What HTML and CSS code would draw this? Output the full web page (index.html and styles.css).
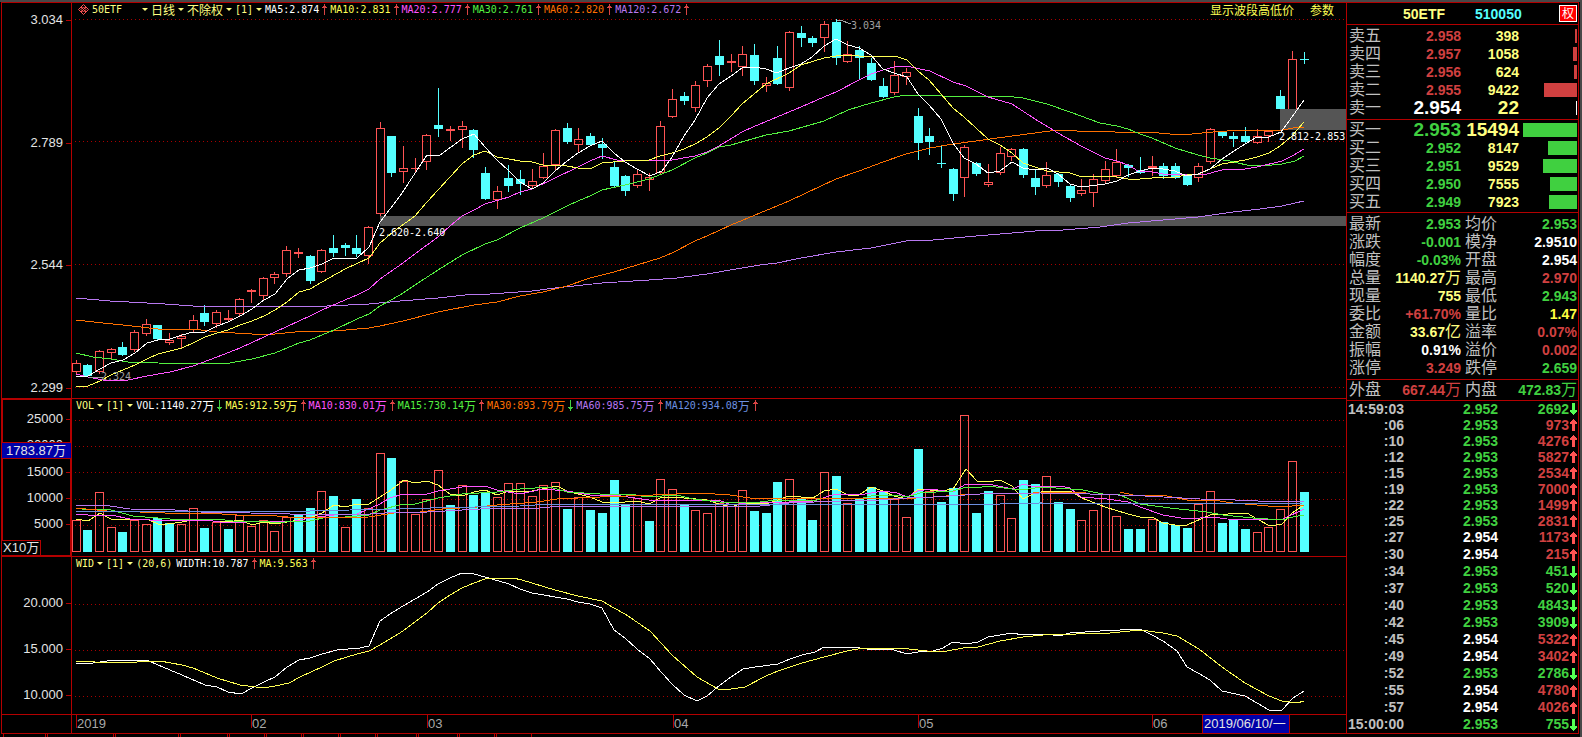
FILE: index.html
```html
<!DOCTYPE html>
<html lang="zh-CN">
<head>
<meta charset="utf-8">
<title>50ETF 510050 日线</title>
<link rel="stylesheet" href="styles.css">
</head>
<body>
<div class="app">
  <main class="charts">
    <section class="panel panel-price">
      <div class="axis axis-price"><span class="tick">3.034</span><span class="tick">2.789</span><span class="tick">2.544</span><span class="tick">2.299</span></div>
      <div class="plot">
        <svg class="canvas canvas-price" viewBox="72 3 1274 395" preserveAspectRatio="none">
          <path class="grid" d="M75 19.5H1346M75 141.5H1346M75 264.5H1346M75 387.5H1346"/>
          <g id="candles"></g>
          <rect class="gap" x="380" y="216" width="966" height="10"/>
          <rect class="gap" x="1280" y="109" width="66" height="21"/>
          <polyline class="line purple" points="76,298 110,301 147,303 165,304 193,306 327,306 369,304 400,301 438,298 474,294 490,294 532,291 555,288 602,283 649,280 677,278 707,274 742,268 760,265 777,263 801,258 836,252 871,248 906,241 933,240 976,236 1012,233 1047,230 1063,230 1100,227 1128,223 1163,220 1198,217 1233,212 1260,209 1282,206 1304,201"/>
          <polyline class="line orange" points="76,320 103,323 123,325 158,329 193,329 217,332 252,334 275,334 295,332 334,331 369,328 380,326 403,321 438,312 474,305 497,302 520,296 543,292 567,286 590,278 614,272 637,265 660,258 672,253 695,241 707,236 731,225 760,213 789,201 836,179 859,171 883,162 906,154 930,148 953,144 976,141 990,139 1012,136 1035,133 1057,130 1077,131 1100,131 1115,132 1147,132 1170,134 1192,134 1213,132 1227,131 1253,130 1283,130 1293,128 1304,127"/>
          <polyline class="line green" points="76,353 93,357 111,359 128,362 158,363 207,364 230,363 252,359 275,353 299,343 310,340 334,330 357,319 369,314 380,306 400,295 415,285 438,270 462,255 485,244 497,240 520,228 543,218 567,206 578,201 590,196 602,190 625,185 649,179 672,170 695,158 707,153 719,147 731,145 766,135 789,131 824,121 848,110 871,103 894,97 906,95 933,95 950,97 973,96 1005,96 1023,98 1047,104 1070,112 1100,123 1117,126 1128,129 1140,134 1152,138 1175,148 1198,155 1210,158 1230,161 1238,163 1247,165 1262,166 1282,164 1295,161 1304,156"/>
          <polyline class="line magenta" points="76,374 88,377 103,380 128,380 147,376 170,372 193,366 217,357 240,348 264,337 275,332 299,321 310,316 322,310 345,300 357,295 369,289 380,279 403,263 427,245 438,237 450,226 462,216 474,210 485,204 509,197 520,192 532,189 555,178 578,167 590,161 602,156 617,160 649,161 672,160 695,156 707,152 719,146 742,132 753,127 777,117 801,107 824,97 836,92 859,80 871,74 883,70 894,67 906,66 930,71 953,82 966,86 988,97 1012,104 1035,119 1058,133 1081,146 1105,158 1117,161 1128,165 1138,171 1152,172 1163,174 1187,175 1207,174 1222,170 1245,169 1257,167 1282,161 1292,156 1304,149"/>
          <polyline class="line yellow" points="76,387 88,386 100,381 111,375 123,370 135,365 147,359 158,354 170,351 182,348 193,343 205,337 217,333 228,330 240,325 252,321 264,316 275,310 287,302 299,292 310,289 322,282 345,269 369,258 380,243 393,232 415,216 427,202 438,190 450,177 462,164 474,155 485,151 497,157 509,159 520,161 532,162 543,165 567,166 578,168 592,168 602,163 625,161 649,160 660,156 672,153 684,149 695,144 707,137 719,128 731,116 742,104 766,84 789,73 801,65 824,58 836,56 848,55 859,56 883,57 895,56 907,60 918,71 929,80 941,94 953,108 964,117 976,128 988,139 1000,145 1012,153 1023,163 1035,167 1047,171 1070,173 1082,177 1105,176 1117,177 1128,179 1140,179 1152,178 1175,177 1187,175 1199,174 1210,169 1222,164 1234,162 1245,160 1257,157 1269,153 1280,146 1292,136 1304,122"/>
          <polyline class="line white" points="76,376 88,376 100,369 111,363 123,360 135,353 147,343 158,340 170,339 182,335 193,332 205,332 217,326 228,322 240,316 252,309 264,300 275,294 287,279 299,270 310,268 322,264 334,258 357,258 369,247 380,222 400,196 427,155 440,155 462,139 474,134 485,147 497,160 509,171 520,182 532,189 543,183 555,171 567,161 578,153 590,146 602,141 614,153 625,162 637,169 650,176 662,171 672,157 684,136 695,120 707,98 719,84 731,76 742,68 754,67 766,69 777,73 789,68 801,64 812,57 824,46 836,39 848,45 859,48 871,55 883,69 894,73 907,77 918,94 929,105 941,119 953,143 964,158 976,164 988,173 1000,171 1012,162 1023,168 1035,170 1047,168 1058,174 1070,184 1081,187 1105,184 1117,181 1128,175 1140,171 1152,168 1163,169 1175,171 1187,176 1198,174 1210,169 1222,159 1234,151 1245,144 1257,137 1269,137 1281,132 1292,117 1304,100"/>
          <path class="pointer" d="M837 20H840L851 24M89 377H103"/>
          <text class="note note-dim" x="851" y="29">3.034</text>
          <text class="note note-dim" x="101" y="380">2.324</text>
          <text class="note" x="379" y="236">2.620-2.640</text>
          <text class="note" x="1279" y="140">2.812-2.853</text>
        </svg>
        <div class="legend">
          <svg class="diamond" viewBox="0 0 11 11"><path d="M5.5 .5L10.5 5.5L5.5 10.5L.5 5.5ZM5.5 3L8 5.5L5.5 8L3 5.5Z"/><path d="M3 3L8 8M8 3L3 8"/></svg>
          <button class="pick pick-name">50ETF</button>
          <button class="pick pick-period"><span class="han">日线</span></button>
          <button class="pick"><span class="han">不除权</span></button>
          <button class="pick pick-num">[1]</button>
          <span class="item white">MA5:2.874</span><span class="item yellow">MA10:2.831</span><span class="item magenta">MA20:2.777</span><span class="item green">MA30:2.761</span><span class="item orange">MA60:2.820</span><span class="item purple">MA120:2.672</span>
          <span class="actions"><button class="action han">显示波段高低价</button><button class="action han">参数</button></span>
        </div>
      </div>
    </section>

    <section class="panel panel-volume">
      <div class="axis axis-volume"><span class="tick">25000</span><span class="tick">20000</span><span class="tick">15000</span><span class="tick">10000</span><span class="tick">5000</span>
        <span class="cursor-value">1783.87<span class="unit">万</span></span><span class="scale">X10<span class="unit">万</span></span></div>
      <div class="plot">
        <svg class="canvas canvas-sub" viewBox="72 399 1274 157" preserveAspectRatio="none">
          <path class="grid" d="M75 420.5H1346M75 446.5H1346M75 472.5H1346M75 499.5H1346M75 525.5H1346"/>
          <g id="volumes"></g>
          <polyline class="line yellow" points="76,519 88,521 100,513 111,519 127,520 147,519 160,525 182,522 193,520 213,521 228,522 240,520 252,525 264,522 275,524 287,522 310,518 322,513 334,505 345,507 357,504 369,504 380,497 391,490 404,480 415,483 427,481 438,485 450,494 462,496 474,492 485,490 497,495 509,491 532,491 557,486 567,491 578,494 590,497 602,502 614,503 637,501 649,504 662,497 684,498 707,500 719,504 731,507 742,503 766,504 789,496 813,498 824,491 836,489 848,495 859,495 871,487 883,491 894,496 907,499 918,489 941,491 953,489 966,469 977,481 988,482 1000,480 1012,486 1023,499 1035,493 1047,491 1070,491 1082,498 1105,507 1128,514 1140,517 1152,517 1163,523 1175,525 1187,525 1210,515 1247,513 1257,519 1270,526 1282,524 1292,513 1304,505"/>
          <polyline class="line magenta" points="76,514 88,515 111,515 130,519 150,520 180,521 205,520 228,523 264,521 290,522 310,518 334,515 357,514 380,504 390,498 403,494 427,494 438,491 462,487 485,486 497,490 520,494 543,489 567,491 590,495 614,495 649,500 672,500 719,500 731,505 754,502 789,502 813,501 836,494 859,495 883,491 897,493 907,497 918,491 930,489 953,492 966,484 993,485 1013,489 1023,484 1035,487 1060,486 1070,488 1081,497 1107,499 1128,502 1140,507 1163,515 1187,519 1213,517 1227,519 1273,520 1283,519 1304,509"/>
          <polyline class="line green" points="76,508 88,510 107,509 133,516 170,519 200,520 217,519 233,521 263,521 277,523 293,521 310,521 327,517 345,517 369,515 380,510 403,504 415,504 438,498 462,494 497,492 520,489 550,487 567,492 600,494 630,494 647,497 677,495 693,499 720,502 760,502 777,500 813,501 824,498 859,499 871,496 894,495 907,497 920,493 953,491 966,487 977,488 988,486 1020,490 1043,487 1083,490 1103,494 1120,495 1140,504 1170,508 1207,512 1223,515 1253,518 1282,520 1293,517 1304,515"/>
          <polyline class="line orange" points="76,508 107,511 140,512 165,513 207,513 237,515 277,516 298,518 369,517 400,512 420,512 443,509 477,507 497,505 537,502 557,499 600,497 653,495 700,493 730,495 750,498 830,498 900,499 933,497 960,495 1000,493 1033,493 1087,492 1120,492 1133,495 1167,496 1187,500 1213,500 1233,503 1280,507 1304,505"/>
          <polyline class="line purple" points="76,505 103,505 130,509 175,510 200,512 250,513 290,514 370,514 400,512 427,512 480,509 540,508 560,506 640,506 760,506 789,503 840,501 880,500 907,498 933,497 965,495 980,494 1040,493 1090,494 1145,496 1200,499 1235,500 1280,502 1304,501"/>
          <polyline class="line blue" points="76,511 310,511 350,510 400,509 430,508 520,506 550,504 1000,504 1040,503 1200,504 1304,503"/>
        </svg>
        <div class="legend">
          <button class="pick pick-kind">VOL</button>
          <button class="pick pick-num">[1]</button>
          <span class="item falling white">VOL:1140.27<span class="han">万</span></span><span class="item yellow">MA5:912.59<span class="han">万</span></span><span class="item magenta">MA10:830.01<span class="han">万</span></span><span class="item green">MA15:730.14<span class="han">万</span></span><span class="item falling orange">MA30:893.79<span class="han">万</span></span><span class="item purple">MA60:985.75<span class="han">万</span></span><span class="item blue">MA120:934.08<span class="han">万</span></span>
        </div>
      </div>
    </section>

    <section class="panel panel-width">
      <div class="axis axis-width"><span class="tick">20.000</span><span class="tick">15.000</span><span class="tick">10.000</span></div>
      <div class="plot">
        <svg class="canvas canvas-sub" viewBox="72 557 1274 157" preserveAspectRatio="none">
          <path class="grid" d="M75 604.5H1346M75 650.5H1346M75 696.5H1346"/>
          <polyline class="line white" points="76,663 93,663 107,661 128,660 147,660 158,665 182,675 205,685 217,687 228,692 241,694 252,688 264,682 275,677 287,667 299,660 310,658 322,654 337,650 360,648 369,646 380,621 390,614 403,606 415,599 427,592 438,584 450,578 462,573 474,574 485,577 509,584 520,589 532,593 567,599 578,602 590,604 602,608 614,630 625,638 637,649 650,659 662,673 672,684 684,695 697,701 707,696 720,685 731,677 743,669 755,667 778,664 790,659 802,655 815,652 824,647 853,647 867,649 894,650 907,654 918,652 933,651 943,648 953,642 966,644 978,642 988,637 1000,635 1012,633 1023,635 1048,634 1059,636 1070,633 1100,631 1140,629 1152,635 1163,641 1177,651 1187,667 1198,673 1210,680 1222,691 1245,696 1257,703 1269,710 1282,710 1293,698 1304,691"/>
          <polyline class="line yellow" points="76,661 95,662 137,662 160,661 182,665 193,668 205,673 217,678 240,685 264,688 275,686 289,683 300,677 322,667 334,661 357,654 369,651 380,645 403,631 415,622 427,613 438,603 450,595 462,588 474,583 485,579 493,578 513,578 522,580 555,590 578,596 602,601 614,608 625,614 650,631 672,655 697,677 718,689 731,689 745,687 766,676 778,671 802,663 824,657 847,651 863,648 900,648 927,651 947,651 963,648 978,647 1000,641 1023,637 1043,635 1110,633 1140,630 1163,633 1177,636 1199,649 1222,667 1245,683 1269,696 1282,701 1297,703 1304,701"/>
        </svg>
        <div class="legend">
          <button class="pick pick-kind">WID</button>
          <button class="pick pick-num">[1]</button>
          <span class="params">(20,6)</span>
          <span class="item white">WIDTH:10.787</span><span class="item yellow">MA:9.563</span>
        </div>
      </div>
    </section>

    <div class="panel panel-dates">
      <div class="axis"></div>
      <div class="dates">
        <span class="month">2019</span><span class="month">02</span><span class="month">03</span><span class="month">04</span><span class="month">05</span><span class="month">06</span>
        <span class="cursor-date">2019/06/10/<span class="unit">一</span></span>
      </div>
    </div>
  </main>

  <aside class="quote">
    <header class="title"><span class="name">50ETF</span><span class="code">510050</span><button class="badge">权</button></header>
    <div class="book asks">
      <div class="level"><span class="label">卖五</span><span class="up">2.958</span><span class="qty">398</span><span class="depth"><i class="bar bar-up" style="width:4%"></i></span></div>
      <div class="level"><span class="label">卖四</span><span class="up">2.957</span><span class="qty">1058</span><span class="depth"><i class="bar bar-up" style="width:7%"></i></span></div>
      <div class="level"><span class="label">卖三</span><span class="up">2.956</span><span class="qty">624</span><span class="depth"><i class="bar bar-up" style="width:6%"></i></span></div>
      <div class="level"><span class="label">卖二</span><span class="up">2.955</span><span class="qty">9422</span><span class="depth"><i class="bar bar-up" style="width:61%"></i></span></div>
      <div class="level best"><span class="label">卖一</span><span class="flat">2.954</span><span class="qty">22</span><span class="depth"><i class="bar bar-flat" style="width:2%"></i></span></div>
    </div>
    <div class="book bids">
      <div class="level best"><span class="label">买一</span><span class="down">2.953</span><span class="qty">15494</span><span class="depth"><i class="bar bar-down" style="width:100%"></i></span></div>
      <div class="level"><span class="label">买二</span><span class="down">2.952</span><span class="qty">8147</span><span class="depth"><i class="bar bar-down" style="width:54%"></i></span></div>
      <div class="level"><span class="label">买三</span><span class="down">2.951</span><span class="qty">9529</span><span class="depth"><i class="bar bar-down" style="width:63%"></i></span></div>
      <div class="level"><span class="label">买四</span><span class="down">2.950</span><span class="qty">7555</span><span class="depth"><i class="bar bar-down" style="width:50%"></i></span></div>
      <div class="level"><span class="label">买五</span><span class="down">2.949</span><span class="qty">7923</span><span class="depth"><i class="bar bar-down" style="width:52%"></i></span></div>
    </div>
    <div class="stats">
      <div class="stat"><span class="label">最新</span><span class="down">2.953</span><span class="label">均价</span><span class="down">2.953</span></div>
      <div class="stat"><span class="label">涨跌</span><span class="down">-0.001</span><span class="label">模净</span><span class="flat">2.9510</span></div>
      <div class="stat"><span class="label">幅度</span><span class="down">-0.03%</span><span class="label">开盘</span><span class="flat">2.954</span></div>
      <div class="stat"><span class="label">总量</span><span class="qty">1140.27<span class="unit">万</span></span><span class="label">最高</span><span class="up">2.970</span></div>
      <div class="stat"><span class="label">现量</span><span class="qty">755</span><span class="label">最低</span><span class="down">2.943</span></div>
      <div class="stat"><span class="label">委比</span><span class="up">+61.70%</span><span class="label">量比</span><span class="ratio">1.47</span></div>
      <div class="stat"><span class="label">金额</span><span class="qty">33.67<span class="unit">亿</span></span><span class="label">溢率</span><span class="up">0.07%</span></div>
      <div class="stat"><span class="label">振幅</span><span class="flat">0.91%</span><span class="label">溢价</span><span class="up">0.002</span></div>
      <div class="stat"><span class="label">涨停</span><span class="up">3.249</span><span class="label">跌停</span><span class="down">2.659</span></div>
    </div>
    <div class="stats totals">
      <div class="stat"><span class="label">外盘</span><span class="up">667.44<span class="unit">万</span></span><span class="label">内盘</span><span class="down">472.83<span class="unit">万</span></span></div>
    </div>
    <table class="trades">
      <tbody id="trades"></tbody>
    </table>
  </aside>
  <nav class="tabs"><span class="tab tab-a"></span><span class="tab tab-b"></span><span class="tab tab-c"></span><span class="tab tab-d"></span><span class="tab tab-e"></span><span class="tab tab-e"></span><span class="tab tab-e"></span><span class="tab tab-e"></span><span class="tab tab-f"></span><span class="tab tab-f"></span><span class="tab tab-e"></span><span class="tab tab-e"></span></nav>
</div>
<script src="chart.js"></script>
</body>
</html>
```

FILE: styles.css
```css
* { box-sizing: border-box; }

body {
  margin: 0;
  background: #000;
  color: #fff;
  font-family: "Liberation Sans", "Noto Sans CJK SC", sans-serif;
}

button {
  margin: 0;
  padding: 0;
  border: 0;
  background: none;
  color: inherit;
  font: inherit;
  line-height: inherit;
}

.app {
  display: grid;
  grid-template-columns: minmax(0, 1fr) 233px;
  min-height: 100vh;
  align-content: start;
  padding-left: 1px;
  padding-right: 1px;
  border-top: 2px solid #484848;
  border-right: 2px solid #484848;
}

.charts {
  border-top: 1px solid #b40000;
  border-left: 1px solid #b40000;
}

.panel {
  display: grid;
  grid-template-columns: 70px minmax(0, 1fr);
  border-bottom: 1px solid #b40000;
}

/* value axis */
.axis {
  position: relative;
  display: flex;
  flex-direction: column;
  justify-content: space-between;
  padding-right: 8px;
  border-right: 1px solid #b40000;
  font-size: 13px;
  line-height: 20px;
  text-align: right;
  color: #e4e4e4;
}
.axis-price { padding-top: 7px; }
.axis-volume {
  padding-top: 10px;
  padding-bottom: 22px;
  box-shadow: inset 0 0 0 1px #b40000;
}
.axis-width { padding-top: 36px; padding-bottom: 9px; }
.tick { position: relative; }
.tick::after {
  content: "";
  position: absolute;
  top: 50%;
  right: -8px;
  width: 5px;
  height: 1px;
  background: #b40000;
}
.unit { font-size: 13px; font-weight: 400; line-height: 1; }
.cursor-value {
  position: absolute;
  top: 43px;
  left: 0;
  right: 0;
  padding-right: 5px;
  border: solid #b40000;
  border-width: 1px 0;
  background: #0000a8;
  line-height: 15px;
}
.scale {
  position: absolute;
  left: 0;
  bottom: 0;
  padding: 0 1px;
  border: solid #b40000;
  border-width: 1px 1px 1px 0;
  background: #000;
  line-height: 14px;
}

/* plots */
.plot { position: relative; }
.canvas { display: block; width: 100%; shape-rendering: crispEdges; }
.canvas-price { height: 395px; }
.canvas-sub { height: 157px; }
.grid { stroke: #a80000; stroke-dasharray: 1 3; fill: none; }
.gap { fill: #555; }
.line { fill: none; stroke: currentColor; stroke-width: 1; }
.rise { fill: none; stroke: #ff5454; }
.rise-fill { fill: #ff5454; }
.fall { fill: #54ffff; }
.pointer { fill: none; stroke: #a0a0a0; }
.note { font: 10px "DejaVu Sans Mono", monospace; fill: #fff; }
.note-dim { fill: #a0a0a0; }

.white { color: #fff; }
.yellow { color: #ffff54; }
.magenta { color: #ff54ff; }
.green { color: #54f040; }
.orange { color: #ff7000; }
.purple { color: #b878f0; }
.blue { color: #6c90e0; }

/* legend line over each plot */
.legend {
  position: absolute;
  top: 0;
  left: 4px;
  right: 12px;
  display: flex;
  align-items: center;
  font: 10px/13px "DejaVu Sans Mono", "Noto Sans CJK SC", monospace;
  color: #ffff80;
  white-space: nowrap;
}
.han { font-family: "Noto Sans CJK SC", sans-serif; font-size: 12px; line-height: 13px; }
.diamond { width: 11px; height: 11px; margin: 0 3px 0 2px; fill: none; stroke: #ff5454; }
.pick { display: flex; align-items: center; margin-right: 3px; }
.pick::after {
  content: "";
  margin-left: 3px;
  border: 3px solid transparent;
  border-top-color: currentColor;
  border-bottom: 0;
}
.pick-name { width: 56px; justify-content: space-between; }
.item { display: flex; align-items: center; }
.item::after {
  content: "";
  width: 11px;
  height: 12px;
  background:
    linear-gradient(#d84444, #d84444) 5px 0 / 1px 11px no-repeat,
    linear-gradient(#d84444, #d84444) 4px 2px / 3px 2px no-repeat,
    linear-gradient(#d84444, #d84444) 3px 3px / 5px 1px no-repeat;
}
.item.falling::after {
  background:
    linear-gradient(#44d044, #44d044) 5px 0 / 1px 11px no-repeat,
    linear-gradient(#44d044, #44d044) 4px 7px / 3px 2px no-repeat,
    linear-gradient(#44d044, #44d044) 3px 7px / 5px 1px no-repeat;
}
.params { margin-right: 4px; }
.actions { display: flex; gap: 16px; margin-left: auto; color: #ffff54; }

/* time axis */
.dates {
  position: relative;
  display: grid;
  grid-template-columns: 175fr 176fr 246fr 245fr 234fr 194fr;
  padding-left: 4px;
  height: 18px;
  font-size: 13px;
  line-height: 18px;
}
.month {
  height: 13px;
  border-left: 1px solid #b40000;
  color: #a8a8a8;
}
.cursor-date {
  position: absolute;
  top: 0;
  left: 88.7%;
  padding: 0 3px 0 1px;
  border: solid #b40000;
  border-width: 0 1px;
  background: #0000a8;
  color: #e4e4e4;
}

/* quote column */
.quote {
  border: 1px solid #b40000;
  font-size: 14px;
  font-weight: 700;
  line-height: 18px;
}
.label { font-size: 16px; font-weight: 400; color: #c0c0c0; text-align: left; }
.up { color: #d04040; }
.down { color: #40d040; }
.flat { color: #fff; }
.qty { color: #ffff80; }
.ratio { color: #ffff40; }

.title {
  display: grid;
  grid-template-columns: 98px 1fr 18px;
  align-items: center;
  height: 22px;
  padding-right: 1px;
  border-bottom: 1px solid #b40000;
}
.name { text-align: right; color: #ffff80; }
.code { padding-left: 30px; color: #54ffff; }
.badge {
  height: 17px;
  border: 1px solid #fff;
  background: #f00;
  color: #fff;
  font-size: 12px;
  font-weight: 400;
  line-height: 14px;
}

.book { border-bottom: 1px solid #b40000; }
.asks { padding: 2px 0; }
.bids { padding: 1px 0; }
.level {
  display: grid;
  grid-template-columns: 32px minmax(0, 1fr) 58px 58px;
  align-items: center;
  height: 18px;
  padding: 0 1px 0 2px;
  text-align: right;
}
.best { font-size: 19px; }
.depth { display: flex; justify-content: flex-end; padding-left: 4px; }
.bar { height: 14px; }
.bar-up { background: #d04040; }
.bar-down { background: #40d040; }
.bar-flat { background: #fff; }

.stats { padding: 2px 0; border-bottom: 1px solid #b40000; }
.stat {
  display: grid;
  grid-template-columns: 32px minmax(0, 1fr) 36px minmax(0, 1fr);
  height: 18px;
  padding: 0 1px 0 2px;
  text-align: right;
}
.stat .label:nth-child(3) { padding-left: 4px; }
.stat .unit { font-size: 16px; }
.totals { padding: 1px 0; }

.trades { width: 100%; border-collapse: collapse; text-align: right; }
.trades td { height: 16px; padding: 0; line-height: 16px; }
.trades tr:nth-child(n + 9) td { height: 17px; line-height: 17px; }
.time { width: 57px; color: #c0c0c0; }
.price { width: 94px; }
.trades .mark { width: 9px; }
.arrow { display: block; width: 7px; height: 12px; margin-left: 1px; fill: currentColor; shape-rendering: crispEdges; }
.arrow.up { color: #ff5454; }
.arrow.down { color: #54ff54; }

/* page tabs along the lower edge */
.tabs { grid-column: 1 / -1; display: flex; gap: 1px; height: 3px; padding-left: 2px; overflow: hidden; }
.tab { border: solid #b40000; border-width: 0 1px; }
.tab-a { width: 43px; }
.tab-b { width: 67px; }
.tab-c { width: 64px; }
.tab-d { width: 48px; }
.tab-e { width: 36px; }
.tab-f { width: 40px; }
```

FILE: chart.js
```js
const NS = "http://www.w3.org/2000/svg";
const FIRST_X = 76.1;
const STEP = 11.695;

// direction, high, body top, body bottom, low
const candles = `
R 360 363 372 373|C 364 365 376 376|R 350 351 372 373|R 348 349 353 358|C 342 347 355 356|R 330 332 350 351|R 319 324 334 335|C 325 325 339 340
R 333 340 343 344|R 334 336 339 347|R 315 320 330 331|C 305 313 322 326|R 310 312 324 327|R 310 318 320 321|R 298 299 314 315|R 289 290 292 302
R 277 278 296 299|R 272 274 278 283|R 246 250 274 276|R 248 252 254 257|C 255 256 281 284|R 249 250 272 272|C 235 248 253 257|C 243 245 248 256
C 235 248 254 257|R 226 227 256 263|R 122 128 214 216|C 136 136 173 177|R 146 168 172 182|R 158 168 169 172|R 134 135 162 169|C 88 125 129 137
R 126 129 131 140|R 121 126 130 147|C 129 130 150 158|C 167 173 199 200|R 186 191 200 208|C 165 178 186 192|C 170 179 184 195|R 169 181 186 187
R 153 166 178 178|R 129 130 165 169|C 123 128 142 144|R 128 139 145 151|C 133 136 145 146|C 138 144 148 159|C 161 167 186 188|C 175 176 191 196
R 169 174 186 187|R 173 177 180 190|R 121 126 173 174|R 89 99 117 117|C 92 96 101 105|R 81 85 108 111|R 64 66 81 86|C 40 56 65 76
R 54 61 63 71|R 46 54 67 75|C 44 55 81 85|R 77 83 86 91|C 46 58 84 85|R 31 32 88 90|C 26 33 38 47|C 36 38 43 47
R 21 24 38 51|C 19 22 58 65|R 41 54 62 62|C 46 50 58 80|C 58 63 80 81|C 78 86 97 98|R 61 75 93 94|R 68 72 77 84
C 108 116 143 160|C 128 136 142 155|C 146 163 164 168|C 168 169 194 201|R 145 147 178 196|C 162 163 174 176|R 164 182 185 186|R 147 153 173 174
R 148 149 157 160|C 148 149 175 178|C 169 178 187 195|R 162 175 186 187|C 173 174 182 187|C 185 186 198 202|R 179 190 194 195|R 174 179 193 206
R 161 169 181 182|R 149 162 176 177|C 164 165 168 177|C 157 170 173 174|R 156 166 168 175|C 163 166 176 179|C 163 166 178 179|C 174 175 185 186
R 163 166 178 181|R 128 129 162 163|C 131 132 136 138|C 132 136 139 147|C 127 136 142 143|R 129 136 143 143|R 130 131 136 141|C 90 96 109 109
R 51 59 112 112|C 52 59 60 64`.trim().split(/[|\n]/);

const volumes = `
R32 C22 R60 R25 C20 R32 R28 C34 C29 R28 R44 C24 R30 C23 R37 R26 R32 R21 R35 C38 C44 R61 C56 R25 C53 R44 R99 C94 R71 R38 R53 R82
C47 R67 C57 C60 R55 R69 R69 R56 R67 R70 C43 R55 C42 C39 C72 C47 R54 C31 R73 R63 C47 R42 R39 R49 R48 R62 C41 C39 C70 R73 C54 C32
R80 C76 R49 C54 C65 C61 R53 R35 C103 R61 C50 C64 R137 C39 C61 R57 R34 C72 C68 R76 C50 C43 R32 R42 R58 R36 C23 C23 R33 C30 C27 C24
R48 R61 C29 C33 C23 R20 R25 R43 R91 C60`.trim().split(/\s+/);

const xAt = (i) => Math.floor(FIRST_X + i * STEP);

function rect(parent, cls, x, y, width, height) {
  const el = document.createElementNS(NS, "rect");
  Object.entries({ class: cls, x, y, width, height }).forEach(([k, v]) => el.setAttribute(k, v));
  parent.append(el);
}

const candleGroup = document.getElementById("candles");
candles.forEach((row, i) => {
  const [dir, ...values] = row.split(" ");
  const [high, top, bottom, low] = values.map(Number);
  const x = xAt(i);
  if (dir === "C") {
    rect(candleGroup, "fall", x, high, 1, low - high);
    rect(candleGroup, "fall", x - 4, top, 9, bottom - top);
    return;
  }
  rect(candleGroup, "rise-fill", x, high, 1, top - high);
  rect(candleGroup, "rise-fill", x, bottom, 1, low - bottom + 1);
  if (bottom - top < 3) rect(candleGroup, "rise-fill", x - 4, top, 9, bottom - top);
  else rect(candleGroup, "rise", x - 3.5, top + 0.5, 8, bottom - top - 1);
});

const volumeGroup = document.getElementById("volumes");
volumes.forEach((v, i) => {
  const h = Number(v.slice(1));
  const x = xAt(i);
  if (v[0] === "C") rect(volumeGroup, "fall", x - 4, 552 - h, 9, h);
  else rect(volumeGroup, "rise", x - 3.5, 552.5 - h, 8, h - 1);
});

// time, price, volume, last-tick direction
const trades = [
  ["14:59:03", "2.952", 2692, "down"], [":06", "2.953", 973, "up"], [":10", "2.953", 4276, "up"], [":12", "2.953", 5827, "up"],
  [":15", "2.953", 2534, "up"], [":19", "2.953", 7000, "up"], [":22", "2.953", 1499, "up"], [":25", "2.953", 2831, "up"],
  [":27", "2.954", 1173, "up"], [":30", "2.954", 215, "up"], [":34", "2.953", 451, "down"], [":37", "2.953", 520, "down"],
  [":40", "2.953", 4843, "down"], [":42", "2.953", 3909, "down"], [":45", "2.954", 5322, "up"], [":49", "2.954", 3402, "up"],
  [":52", "2.953", 2786, "down"], [":55", "2.954", 4780, "up"], [":57", "2.954", 4026, "up"], ["15:00:00", "2.953", 755, "down"],
];
const arrows = {
  up: "M3 0H4V1H5V2H6V3H7V5H5V12H2V5H0V3H1V2H2V1H3Z",
  down: "M3 12H4V11H5V10H6V9H7V7H5V0H2V7H0V9H1V10H2V11H3Z",
};
document.getElementById("trades").innerHTML = trades.map(([time, price, qty, dir]) => `
  <tr><td class="time">${time}</td><td class="price ${price === "2.954" ? "flat" : "down"}">${price}</td>
  <td class="${dir}">${qty}</td><td class="mark"><svg class="arrow ${dir}" viewBox="0 0 7 12"><path d="${arrows[dir]}"/></svg></td></tr>`).join("");
```
